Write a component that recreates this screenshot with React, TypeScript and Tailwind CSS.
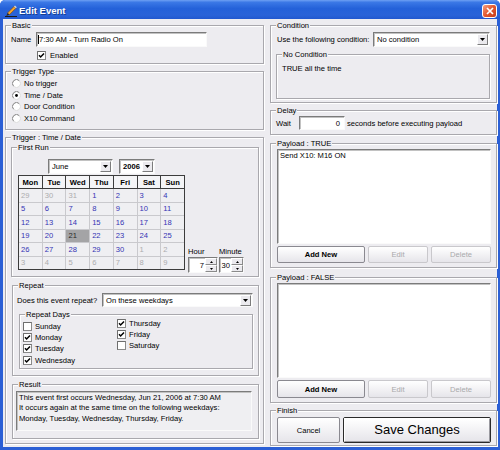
import React from "react";

const SUNKEN =
  "border border-t-[#7b7b7b] border-l-[#7b7b7b] border-b-[#fafafa] border-r-[#fafafa] shadow-[inset_1px_1px_0_#c2c2c2]";

function Group({
  label,
  className,
  children,
}: {
  label: string;
  className: string;
  children?: React.ReactNode;
}) {
  return (
    <div
      className={
        "relative shrink-0 border border-[#a9a8ad] shadow-[inset_1px_1px_0_#ffffff,1px_1px_0_#ffffff] " +
        className
      }
    >
      <span className="absolute left-[5px] top-[-5px] px-[1px] leading-[9px] bg-[#edecf0] whitespace-nowrap">
        {label}
      </span>
      {children}
    </div>
  );
}

function Check({ on }: { on: boolean }) {
  return (
    <svg width="9" height="9" viewBox="0 0 9 9" className="shrink-0">
      <rect x="0.5" y="0.5" width="8" height="8" fill="#fff" stroke="#8a8a8a" />
      <path d="M0.5 8.5V0.5H8.5" fill="none" stroke="#6e6e6e" />
      {on && (
        <path d="M2 4.3 L3.6 6 L7 2.4" stroke="#000" strokeWidth="1.5" fill="none" />
      )}
    </svg>
  );
}

function Radio({ on }: { on: boolean }) {
  return (
    <svg width="9" height="9" viewBox="0 0 9 9" className="shrink-0">
      <circle cx="4.5" cy="4.5" r="4" fill="#fff" />
      <path d="M1.67 7.33 A4 4 0 0 1 7.33 1.67" fill="none" stroke="#808080" />
      <path d="M7.33 1.67 A4 4 0 0 1 1.67 7.33" fill="none" stroke="#dcdcdc" />
      {on && <circle cx="4.5" cy="4.5" r="1.4" fill="#000" />}
    </svg>
  );
}

function DropBtn() {
  return (
    <div className="w-[11px] h-[11px] shrink-0 bg-[#ebeaee] border border-t-white border-l-white border-b-[#7c7c7c] border-r-[#7c7c7c] flex items-center justify-center">
      <svg width="5" height="3" viewBox="0 0 5 3">
        <path d="M0 0H5L2.5 3Z" fill="#000" />
      </svg>
    </div>
  );
}

function Select({
  text,
  className,
  bold,
}: {
  text: string;
  className: string;
  bold?: boolean;
}) {
  return (
    <div
      className={
        "flex items-center justify-between bg-white pl-[3px] pr-[1px] shrink-0 " +
        SUNKEN +
        " " +
        className
      }
    >
      <span className={bold ? "font-bold" : ""}>{text}</span>
      <DropBtn />
    </div>
  );
}

function Btn({
  children,
  className,
  disabled,
}: {
  children: React.ReactNode;
  className: string;
  disabled?: boolean;
}) {
  return (
    <div
      className={
        "flex items-center justify-center shrink-0 rounded-[2px] border bg-[linear-gradient(to_bottom,#ffffff,#e6e5ea)] " +
        (disabled ? "border-[#c9c8cc] text-[#a9a9ab]" : "border-[#8a8990] text-black") +
        " " +
        className
      }
    >
      {children}
    </div>
  );
}

function SpinBtn({ up }: { up?: boolean }) {
  return (
    <div className="flex-1 bg-[#ebeaee] border border-t-white border-l-white border-b-[#8a8a8a] border-r-[#8a8a8a] flex items-center justify-center">
      <svg width="3" height="2" viewBox="0 0 3 2">
        <path d={up ? "M0 2H3L1.5 0Z" : "M0 0H3L1.5 2Z"} fill="#000" />
      </svg>
    </div>
  );
}

function Spin({ v, className }: { v: string; className: string }) {
  return (
    <div className={"flex h-[16px] bg-white " + SUNKEN + " " + className}>
      <div className="flex-1 flex items-center justify-end pr-[1px]">{v}</div>
      <div className="w-[12px] flex flex-col">
        <SpinBtn up />
        <SpinBtn />
      </div>
    </div>
  );
}

function PenIcon() {
  return (
    <svg width="12" height="12" viewBox="0 0 12 12" className="shrink-0">
      <path d="M2.5 8 L9 1.5 L10.8 3.3 L4.3 9.8 Z" fill="#f4a52c" stroke="#7a3f08" strokeWidth="0.6" />
      <path d="M9 1.5 L10 0.5 L11.8 2.3 L10.8 3.3 Z" fill="#d8d8d8" />
      <path d="M2.5 8 L1.3 10.9 L4.3 9.8 Z" fill="#2a2a2a" />
      <rect x="0" y="11" width="12" height="1" fill="#1a1a1a" />
    </svg>
  );
}

function CloseBtn() {
  return (
    <div className="w-[15px] h-[14px] rounded-[3px] border border-white bg-[linear-gradient(135deg,#f6a182_0%,#e2582f_50%,#c53d1a_100%)] flex items-center justify-center">
      <svg width="8" height="8" viewBox="0 0 8 8">
        <path d="M1 1L7 7M7 1L1 7" stroke="#fff" strokeWidth="1.7" />
      </svg>
    </div>
  );
}

const HEAD = ["Mon", "Tue", "Wed", "Thu", "Fri", "Sat", "Sun"];
const CAL: [number, boolean][] = [];
[29, 30, 31].forEach((d) => CAL.push([d, false]));
for (let d = 1; d <= 30; d++) CAL.push([d, true]);
for (let d = 1; d <= 9; d++) CAL.push([d, false]);

function Calendar() {
  return (
    <div className="w-[167px] h-[95px] mb-[3px] shrink-0 border border-[#3c3c3c] bg-[#3c3c3c] flex flex-col">
      <div className="grid grid-cols-7 gap-x-px h-[12px]">
        {HEAD.map((h) => (
          <div key={h} className="bg-[#f4f4f6] font-bold flex items-center justify-center">
            {h}
          </div>
        ))}
      </div>
      <div className="mt-px flex-1 grid grid-cols-7 grid-rows-6 gap-px bg-[#c9c9cd]">
        {CAL.map(([d, cur], i) => {
          const sel = cur && d === 21;
          return (
            <div
              key={i}
              className={
                "flex items-center pl-[2px] " +
                (sel
                  ? "bg-[#a4a4a6] text-[#2a2a2a]"
                  : cur
                  ? "bg-[#efeff2] text-[#3434b4]"
                  : "bg-[#efeff2] text-[#acacae]")
              }
            >
              {d}
            </div>
          );
        })}
      </div>
    </div>
  );
}

export default function App() {
  return (
    <div className="w-[500px] h-[450px] flex flex-col bg-[#2b5fd5] font-['Liberation_Sans',Arial,sans-serif] text-[7.6px] leading-[9px] text-black overflow-hidden select-none rounded-t-[5px]">
      {/* Title bar */}
      <div className="h-[19px] shrink-0 flex items-center pl-[5px] pr-[3px] pt-[2px] bg-[linear-gradient(to_bottom,#6ea0f3_0%,#3b78e6_12%,#2461d9_45%,#2a63d8_80%,#2158cf_100%)] rounded-t-[5px]">
        <PenIcon />
        <span className="ml-[2px] text-white font-bold text-[9.5px] leading-[12px] [text-shadow:1px_1px_0_#17408f]">
          Edit Event
        </span>
        <div className="ml-auto">
          <CloseBtn />
        </div>
      </div>

      {/* Body */}
      <div className="flex-1 mx-[3px] mb-[3px] bg-[#edecf0] flex pl-[2px] gap-[6px]">
        {/* Left column */}
        <div className="w-[259px] shrink-0 flex flex-col pt-[6px]">
          <Group label="Basic" className="h-[39px] pt-[6px] pl-[5px]">
            <div className="flex items-center h-[15px]">
              <span className="w-[25px]">Name</span>
              <div className={"w-[171px] h-[15px] bg-white flex items-center pl-[1px] " + SUNKEN}>
                <span className="w-px h-[9px] bg-black" />
                <span>7:30 AM - Turn Radio On</span>
              </div>
            </div>
            <div className="flex items-center mt-[4px] ml-[26px] h-[9px] gap-[4px]">
              <Check on />
              <span>Enabled</span>
            </div>
          </Group>

          <Group label="Trigger Type" className="mt-[7px] h-[59px] pt-[6px] pl-[6px]">
            {[
              ["No trigger", false],
              ["Time / Date", true],
              ["Door Condition", false],
              ["X10 Command", false],
            ].map(([t, on]) => (
              <div key={t as string} className="flex items-center h-[11.5px] gap-[3px]">
                <Radio on={on as boolean} />
                <span>{t as string}</span>
              </div>
            ))}
          </Group>

          <Group label="Trigger : Time / Date" className="mt-[7px] h-[307px] pt-[9px] pl-[5px]">
            <Group label="First Run" className="w-[248px] h-[130px] pt-[11px] pl-[6px]">
              <div className="ml-[30px] flex gap-[6px] h-[15px]">
                <Select text="June" className="w-[65px] h-[15px]" />
                <Select text="2006" bold className="w-[36px] h-[15px]" />
              </div>
              <div className="flex items-end mt-[1px]">
                <Calendar />
                <div className="ml-[3px] flex flex-col">
                  <div className="flex h-[9px] mb-[1px]">
                    <span className="w-[31px]">Hour</span>
                    <span>Minute</span>
                  </div>
                  <div className="flex gap-[1px]">
                    <Spin v="7" className="w-[30px]" />
                    <Spin v="30" className="w-[25px]" />
                  </div>
                </div>
              </div>
            </Group>

            <Group label="Repeat" className="mt-[8px] ml-[1px] w-[247px] h-[91px] pt-[7px] pl-[4px]">
              <div className="flex items-center h-[14px]">
                <span className="w-[85px]">Does this event repeat?</span>
                <Select text="On these weekdays" className="w-[151px] h-[14px]" />
              </div>
              <Group label="Repeat Days" className="mt-[7px] ml-[2px] w-[234px] h-[55px] flex">
                <div className="w-[97px] pl-[3px] pt-[5.5px]">
                  {[
                    ["Sunday", false],
                    ["Monday", true],
                    ["Tuesday", true],
                    ["Wednesday", true],
                  ].map(([t, on]) => (
                    <div key={t as string} className="flex items-center h-[11.3px] gap-[3px]">
                      <Check on={on as boolean} />
                      <span>{t as string}</span>
                    </div>
                  ))}
                </div>
                <div className="pt-[2.5px]">
                  {[
                    ["Thursday", true],
                    ["Friday", true],
                    ["Saturday", false],
                  ].map(([t, on]) => (
                    <div key={t as string} className="flex items-center h-[11.3px] gap-[3px]">
                      <Check on={on as boolean} />
                      <span>{t as string}</span>
                    </div>
                  ))}
                </div>
              </Group>
            </Group>

            <Group label="Result" className="mt-[8px] ml-[1px] w-[247px] h-[55px] pt-[6px] pl-[3px]">
              <div className={"w-[236px] h-[40px] bg-[#efeff2] pl-[2px] pt-[1px] leading-[10.3px] " + SUNKEN}>
                <div>This event first occurs Wednesday, Jun 21, 2006 at 7:30 AM</div>
                <div>It occurs again at the same time on the following weekdays:</div>
                <div>Monday, Tuesday, Wednesday, Thursday, Friday.</div>
              </div>
            </Group>
          </Group>
        </div>

        {/* Right column */}
        <div className="w-[227px] shrink-0 flex flex-col pt-[6px]">
          <Group label="Condition" className="h-[78px] pt-[6px] pl-[6px]">
            <div className="flex items-center h-[15px]">
              <span className="w-[96px]">Use the following condition:</span>
              <Select text="No condition" className="w-[117px] h-[15px]" />
            </div>
            <Group label="No Condition" className="mt-[7px] ml-[-1px] w-[214px] h-[45px] pt-[9px] pl-[5px]">
              <span>TRUE all the time</span>
            </Group>
          </Group>

          <Group label="Delay" className="mt-[7px] h-[25px] pt-[5px] pl-[5px]">
            <div className="flex items-center h-[14px]">
              <span className="w-[23px]">Wait</span>
              <div className={"w-[46px] h-[14px] bg-white flex items-center justify-end pr-[4px] " + SUNKEN}>0</div>
              <span className="ml-[2px]">seconds before executing payload</span>
            </div>
          </Group>

          <Group label="Payload : TRUE" className="mt-[8px] h-[125px] pt-[5px] pl-[6px]">
            <div className={"w-[214px] h-[95px] bg-white pl-[2px] pt-[1px] " + SUNKEN}>Send X10: M16 ON</div>
            <div className="mt-[2px] flex gap-[3px] h-[17px]">
              <Btn className="w-[88px] font-bold">Add New</Btn>
              <Btn className="w-[60px]" disabled>
                Edit
              </Btn>
              <Btn className="w-[60px]" disabled>
                Delete
              </Btn>
            </div>
          </Group>

          <Group label="Payload : FALSE" className="mt-[9px] h-[126px] pt-[5px] pl-[6px]">
            <div className={"w-[214px] h-[95px] bg-white " + SUNKEN} />
            <div className="mt-[2px] flex gap-[3px] h-[18px]">
              <Btn className="w-[88px] font-bold">Add New</Btn>
              <Btn className="w-[60px]" disabled>
                Edit
              </Btn>
              <Btn className="w-[60px]" disabled>
                Delete
              </Btn>
            </div>
          </Group>

          <Group label="Finish" className="mt-[7px] h-[36px] pt-[6px] pl-[6px] flex gap-[3px]">
            <Btn className="w-[63px] h-[26px]">Cancel</Btn>
            <div className="w-[148px] h-[26px] border border-[#2a2a2a] rounded-[2px] flex">
              <div className="flex-1 flex items-center justify-center rounded-[1px] border border-t-white border-l-white border-b-[#9a9aa0] border-r-[#9a9aa0] bg-[linear-gradient(to_bottom,#ffffff,#e6e5ea)] text-[13px] leading-[16px]">
                Save Changes
              </div>
            </div>
          </Group>
        </div>
      </div>
    </div>
  );
}
